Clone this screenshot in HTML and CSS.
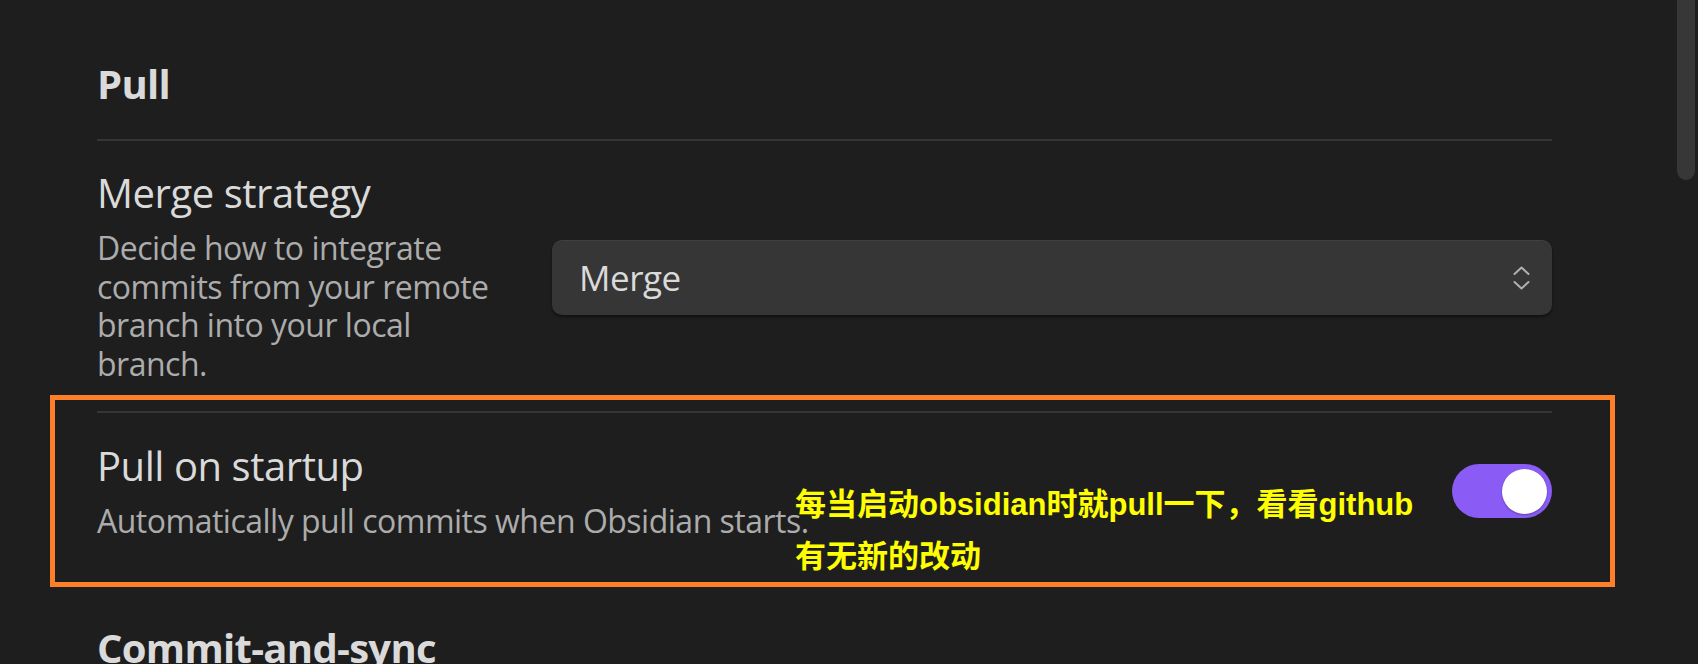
FILE: index.html
```html
<!DOCTYPE html>
<html lang="en">
<head>
<meta charset="utf-8">
<title>Git settings – Pull</title>
<link rel="stylesheet" href="styles.css">
</head>
<body>
<div class="page">
  <div class="settings">
    <h2 class="heading heading-first">Pull</h2>

    <div class="setting-item">
      <div class="info info-narrow">
        <div class="name">Merge strategy</div>
        <div class="desc">Decide how to integrate commits from your remote branch into your local branch.</div>
      </div>
      <div class="control">
        <div class="select">
          <span class="select-value">Merge</span>
          <svg class="chevrons" width="17" height="24" viewBox="0 0 17 24" fill="none" stroke="#b0b0b0" stroke-width="2" stroke-linecap="round" stroke-linejoin="round">
            <polyline points="1.5,8 8.5,1.5 15.5,8"/>
            <polyline points="1.5,16 8.5,22.5 15.5,16"/>
          </svg>
        </div>
      </div>
    </div>

    <div class="setting-item highlighted">
      <div class="info">
        <div class="name">Pull on startup</div>
        <div class="desc">Automatically pull commits when Obsidian starts.</div>
      </div>
      <div class="control">
        <div class="toggle"><div class="knob"></div></div>
      </div>
      <div class="annot-box"></div>
      <div class="annot-text">每当启动obsidian时就pull一下，看看github<br>有无新的改动</div>
    </div>

    <h2 class="heading heading-next">Commit-and-sync</h2>
  </div>
  <div class="scroll-thumb"></div>
</div>
</body>
</html>
```

FILE: styles.css
```css
html, body {
  margin: 0;
  padding: 0;
  background: #1e1e1e;
  overflow: hidden;
}

body {
  font-family: "Open Sans", "Noto Sans", sans-serif;
  color: #dadada;
}

.page {
  width: 1698px;
  height: 664px;
  overflow: hidden;
}

.settings {
  margin-left: 97px;
  width: 1455px;
}

.heading {
  margin: 0;
  font-size: 40px;
  font-weight: 700;
  line-height: 48px;
  letter-spacing: -0.7px;
  color: #dadada;
}

.heading-first {
  padding-top: 60px;
  padding-bottom: 31px;
}

.heading-next {
  padding-top: 56px;
}

.setting-item {
  display: flex;
  align-items: center;
  border-top: 2px solid #363636;
  padding: 28px 0 28px;
}

.setting-item.highlighted {
  position: relative;
  padding: 29px 0 27px;
}

.info {
  flex: 1 1 auto;
}

.info-narrow {
  flex: 0 0 420px;
}

.name {
  font-size: 40px;
  line-height: 48px;
  letter-spacing: -0.45px;
  color: #dadada;
}

.desc {
  margin-top: 12px;
  font-size: 32px;
  line-height: 38.5px;
  letter-spacing: -0.5px;
  color: #acacac;
}

.control {
  flex: 0 0 auto;
  margin-left: auto;
  display: flex;
  align-items: center;
}

.select {
  margin-top: 3px;
  width: 1000px;
  height: 75px;
  box-sizing: border-box;
  padding: 0 22px 0 27px;
  display: flex;
  align-items: center;
  justify-content: space-between;
  background: #363636;
  border-radius: 10px;
  box-shadow: 0 2px 3px rgba(0, 0, 0, 0.45), inset 0 1px 0 rgba(255, 255, 255, 0.05);
}

.select-value {
  font-size: 35px;
  line-height: 42px;
  letter-spacing: -0.5px;
  color: #dadada;
}

.chevrons {
  display: block;
}

.toggle {
  margin-top: 0;
  width: 100px;
  height: 54px;
  box-sizing: border-box;
  border-radius: 27px;
  background: #8a5cf5;
  display: flex;
  align-items: center;
  justify-content: flex-end;
  padding-right: 5px;
}

.knob {
  width: 45px;
  height: 45px;
  border-radius: 50%;
  background: #ffffff;
  box-shadow: 0 1px 2px rgba(0, 0, 0, 0.3);
}

.annot-box {
  position: absolute;
  top: -18px;
  left: -47px;
  width: 1565px;
  height: 192px;
  box-sizing: border-box;
  border: 5px solid #fd7f27;
  pointer-events: none;
}

.annot-text {
  position: absolute;
  top: 66px;
  left: 698px;
  font-family: "Liberation Sans", "Noto Sans CJK SC", sans-serif;
  font-weight: 700;
  font-size: 31px;
  line-height: 52px;
  color: #ffff00;
  white-space: nowrap;
}

.scroll-thumb {
  position: fixed;
  top: 0;
  left: 1677px;
  width: 18px;
  height: 180px;
  background: #373737;
  border-radius: 0 0 9px 9px;
}
```
